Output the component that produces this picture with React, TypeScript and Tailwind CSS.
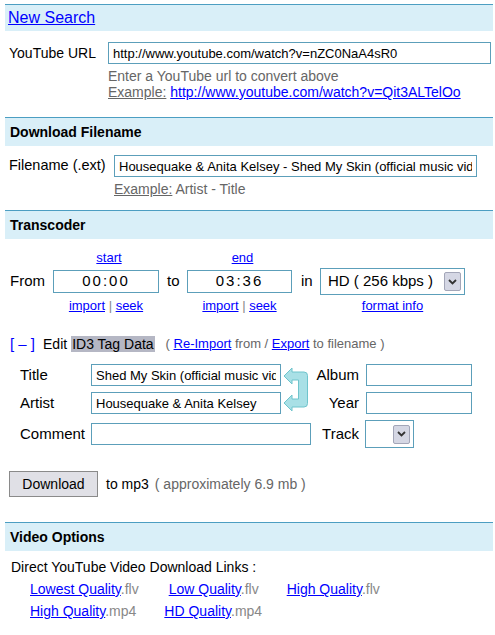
import React from 'react';

const font = "font-['Liberation_Sans',Arial,sans-serif]";
const inputCls =
  'h-[22px] border border-[#5c9fba] bg-white px-[4px] text-[13px] text-black outline-none';
const link = 'text-[#0000ff] underline';

function SectionHeader({ children }: { children: React.ReactNode }) {
  return (
    <div className="flex h-[29px] items-center border-t border-[#4c9ec2] bg-[#d9eff8] pl-[5px] text-[14px] font-bold text-black">
      {children}
    </div>
  );
}

function DropButton() {
  return (
    <div className="flex h-[19px] w-[17px] items-center justify-center rounded-[2px] border border-[#a3a6b8] bg-[#d5d7e4]">
      <svg width="9" height="6" viewBox="0 0 9 6">
        <path d="M1 1 L4.5 4.5 L8 1" fill="none" stroke="#333" strokeWidth="1.8" />
      </svg>
    </div>
  );
}

function LinkArrow() {
  return (
    <svg
      className="absolute left-[278px] top-[2px]"
      width="26"
      height="47"
      viewBox="0 0 26 47"
    >
      <path
        d="M1 10 L9 2 L9 6 L21 6 Q24.5 6 24.5 9.5 L24.5 37.5 Q24.5 41 21 41 L9 41 L9 45 L1 37 L9 29 L9 33 L15.5 33 L15.5 14 L9 14 L9 18 Z"
        fill="#a9e0e6"
        stroke="#6fc4cc"
        strokeWidth="1"
      />
    </svg>
  );
}

export default function App() {
  return (
    <div className={`${font} min-h-[635px] w-[495px] bg-white pt-[4px] text-black`}>
      <div className="mx-[5px] w-[488px]">
        {/* New search */}
        <div className="flex h-[27px] items-center border-t border-[#4c9ec2] bg-[#d9eff8] pl-[3px]">
          <a className={`${link} text-[16px]`}>New Search</a>
        </div>

        <div className="mt-[11px] flex items-center pl-[4px]">
          <span className="w-[99px] text-[14px]">YouTube URL</span>
          <input
            className={`${inputCls} w-[383px]`}
            readOnly
            value="http://www.youtube.com/watch?v=nZC0NaA4sR0"
          />
        </div>
        <div className="mt-[4px] pl-[103px] text-[14px] leading-[16px] text-[#666]">
          <div>Enter a YouTube url to convert above</div>
          <div>
            <span className="underline">Example:</span>{' '}
            <a className={link}>http://www.youtube.com/watch?v=Qit3ALTelOo</a>
          </div>
        </div>

        {/* Download filename */}
        <div className="mt-[17px]">
          <SectionHeader>Download Filename</SectionHeader>
        </div>
        <div className="mt-[9px] flex items-center pl-[4px]">
          <span className="w-[105px] text-[14.5px]">Filename (.ext)</span>
          <input
            className={`${inputCls} w-[363px]`}
            readOnly
            value="Housequake & Anita Kelsey - Shed My Skin (official music video)"
          />
        </div>
        <div className="mt-[4px] pl-[109px] text-[14px] leading-[16px] text-[#666]">
          <span className="underline">Example:</span> Artist - Title
        </div>

        {/* Transcoder */}
        <div className="mt-[13px]">
          <SectionHeader>Transcoder</SectionHeader>
        </div>

        <div className="mt-[11px] flex pl-[48px] text-[13px] leading-[16px]">
          <div className="w-[106px] pl-[6px] text-center">
            <a className={link}>start</a>
          </div>
          <div className="w-[28px]" />
          <div className="w-[105px] pl-[6px] text-center">
            <a className={link}>end</a>
          </div>
        </div>

        <div className="mt-[2px] flex h-[27px] items-center pl-[5px] text-[15px]">
          <span className="w-[43px]">From</span>
          <div className="flex h-[23px] w-[106px] items-center justify-center border border-[#5c9fba] text-[15px] tracking-[2px]">
            00:00
          </div>
          <span className="w-[28px] pl-[8px]">to</span>
          <div className="flex h-[23px] w-[105px] items-center justify-center border border-[#5c9fba] text-[15px] tracking-[2px]">
            03:36
          </div>
          <span className="w-[28px] pl-[9px]">in</span>
          <div className="flex h-[27px] w-[145px] items-center justify-between border border-[#5c9fba] pl-[7px] pr-[3px]">
            <span className="text-[15px]">HD ( 256 kbps )</span>
            <DropButton />
          </div>
        </div>

        <div className="mt-[3px] flex pl-[48px] text-[13px] leading-[16px]">
          <div className="w-[106px] text-center">
            <a className={link}>import</a> <span className="text-[#888]">|</span>{' '}
            <a className={link}>seek</a>
          </div>
          <div className="w-[28px]" />
          <div className="w-[105px] text-center">
            <a className={link}>import</a> <span className="text-[#888]">|</span>{' '}
            <a className={link}>seek</a>
          </div>
          <div className="w-[28px]" />
          <div className="w-[145px] text-center">
            <a className={link}>format info</a>
          </div>
        </div>

        {/* ID3 */}
        <div className="mt-[22px] flex items-center pl-[5px] leading-[16px]">
          <span className="text-[15px] text-[#0000ff]">[ &ndash; ]</span>
          <span className="ml-[8px] text-[14px]">Edit</span>
          <span className="ml-[4px] bg-[#b5b7c4] px-[1px] text-[14px]">ID3 Tag Data</span>
          <span className="ml-[11px] text-[13px] text-[#666]">
            ( <a className={link}>Re-Import</a> from / <a className={link}>Export</a> to filename )
          </span>
        </div>

        <div className="relative mt-[12px] flex w-[467px] flex-col gap-[6px] pl-[15px] text-[15px]">
          <div className="flex h-[22px] items-center">
            <span className="w-[71px]">Title</span>
            <input
              className={`${inputCls} w-[190px]`}
              readOnly
              value="Shed My Skin (official music video)"
            />
            <span className="flex-1 text-right">Album</span>
            <div className="w-[113px] pl-[7px]">
              <input className={`${inputCls} w-[106px]`} readOnly value="" />
            </div>
          </div>
          <div className="flex h-[22px] items-center">
            <span className="w-[71px]">Artist</span>
            <input
              className={`${inputCls} w-[190px]`}
              readOnly
              value="Housequake & Anita Kelsey"
            />
            <span className="flex-1 text-right">Year</span>
            <div className="w-[113px] pl-[7px]">
              <input className={`${inputCls} w-[106px]`} readOnly value="" />
            </div>
          </div>
          <div className="flex h-[28px] items-center">
            <span className="w-[71px]">Comment</span>
            <input className={`${inputCls} w-[220px]`} readOnly value="" />
            <span className="flex-1 text-right">Track</span>
            <div className="w-[113px] pl-[6px]">
              <div className="flex h-[28px] w-[49px] items-center justify-end border border-[#5c9fba] pr-[3px]">
                <DropButton />
              </div>
            </div>
          </div>
          <LinkArrow />
        </div>

        {/* Download */}
        <div className="mt-[23px] flex items-center pl-[4px] text-[14px]">
          <button className="h-[26px] w-[89px] border border-[#8a8a8a] bg-[#e0e0e6] text-[14px] text-black">
            Download
          </button>
          <span className="ml-[8px]">to mp3</span>
          <span className="ml-[6px] text-[#666]">( approximately 6.9 mb )</span>
        </div>

        {/* Video options */}
        <div className="mt-[25px]">
          <SectionHeader>Video Options</SectionHeader>
        </div>
        <div className="mt-[5px] pl-[6px] text-[14px] leading-[22px]">
          Direct YouTube Video Download Links :
        </div>
        <div className="flex pl-[25px] text-[14px] leading-[22px]">
          <span>
            <a className={link}>Lowest Quality</a>
            <span className="text-[#888]">.flv</span>
          </span>
          <span className="ml-[30px]">
            <a className={link}>Low Quality</a>
            <span className="text-[#888]">.flv</span>
          </span>
          <span className="ml-[28px]">
            <a className={link}>High Quality</a>
            <span className="text-[#888]">.flv</span>
          </span>
        </div>
        <div className="flex pl-[25px] text-[14px] leading-[22px]">
          <span>
            <a className={link}>High Quality</a>
            <span className="text-[#888]">.mp4</span>
          </span>
          <span className="ml-[28px]">
            <a className={link}>HD Quality</a>
            <span className="text-[#888]">.mp4</span>
          </span>
        </div>
      </div>
    </div>
  );
}
